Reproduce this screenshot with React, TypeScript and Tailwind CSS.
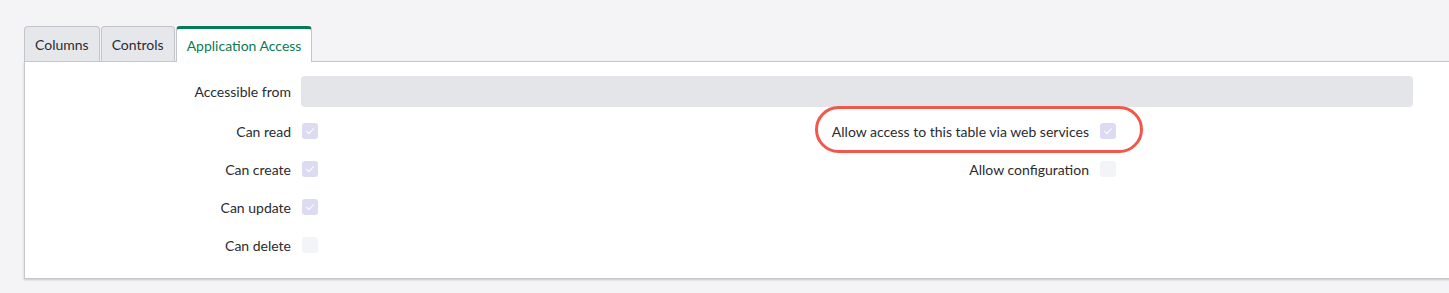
const Check = ({ checked }: { checked: boolean }) => (
  <span
    className={`flex h-4 w-4 items-center justify-center rounded-[3px] ${
      checked ? "bg-[#dcdbf1]" : "bg-[#f3f4f7]"
    }`}
  >
    {checked && (
      <svg viewBox="0 0 16 16" className="h-3 w-3" fill="none">
        <path
          d="M3.5 8.5l3 3 6-6.5"
          stroke="#ffffff"
          strokeWidth="1.4"
          strokeLinecap="round"
          strokeLinejoin="round"
        />
      </svg>
    )}
  </span>
);

const leftRows = [
  { label: "Can read", checked: true },
  { label: "Can create", checked: true },
  { label: "Can update", checked: true },
  { label: "Can delete", checked: false },
];

const tabs = ["Columns", "Controls"];

export default function App() {
  return (
    <div
      className="min-h-[293px] overflow-hidden bg-[#f4f4f6] pl-[24px] pt-[26px] text-[14px] text-[#2b2b30]"
      style={{ fontFamily: "Lato, 'Noto Sans', sans-serif" }}
    >
      {/* tabs */}
      <div className="relative z-10 flex gap-[1px]">
        {tabs.map((t) => (
          <div
            key={t}
            className="flex h-[35px] items-center rounded-t-[4px] border border-b-0 border-[#c4c5cb] bg-[#e6e7eb] px-[10px]"
          >
            {t}
          </div>
        ))}
        <div className="-mb-[1px] flex h-[36px] items-center rounded-t-[4px] border border-b-0 border-t-[3px] border-[#c4c5cb] border-t-[#047a55] bg-white px-[10px] pb-[1px] text-[#0b7a53]">
          Application Access
        </div>
      </div>

      {/* panel */}
      <div className="w-[1460px] border border-[#c6c7cd] bg-white pb-[14px] pt-[14px] shadow-[0_1px_2px_rgba(0,0,0,0.18)]">
        <div className="flex items-center">
          <div className="w-[266px] text-right">Accessible from</div>
          <div className="ml-[10px] h-[31px] w-[1112px] rounded-[4px] bg-[#e4e5e9]" />
        </div>

        <div className="mt-[5px] flex">
          <div className="w-[700px]">
            {leftRows.map((r) => (
              <div key={r.label} className="flex h-[38px] items-center">
                <div className="w-[266px] text-right">{r.label}</div>
                <div className="ml-[11px]">
                  <Check checked={r.checked} />
                </div>
              </div>
            ))}
          </div>
          <div>
            <div className="relative flex h-[38px] items-center">
              <div className="w-[364px] text-right">
                Allow access to this table via web services
              </div>
              <div className="ml-[11px]">
                <Check checked />
              </div>
              <div className="pointer-events-none absolute left-[90px] top-[-6px] h-[47px] w-[328px] rounded-full border-[3px] border-[#f2574b]" />
            </div>
            <div className="flex h-[38px] items-center">
              <div className="w-[364px] text-right">Allow configuration</div>
              <div className="ml-[11px]">
                <Check checked={false} />
              </div>
            </div>
          </div>
        </div>
      </div>
    </div>
  );
}
